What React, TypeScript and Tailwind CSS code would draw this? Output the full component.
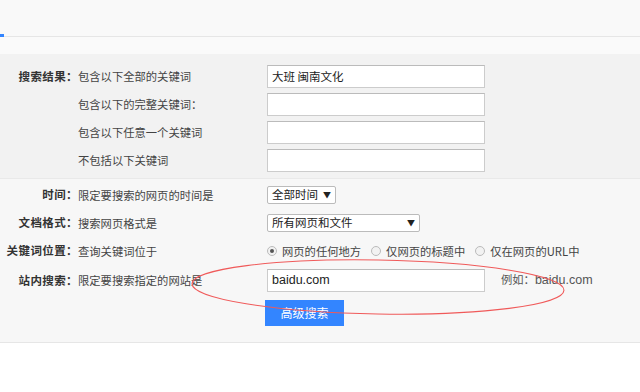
import React from "react";

const cjk = { fontFamily: '"Noto Sans CJK SC", "Noto Sans", sans-serif' };
const latin = { fontFamily: '"Liberation Sans", Arial, sans-serif' };

function Row({ label, desc, children, h }: { label?: string; desc: string; children?: React.ReactNode; h: string }) {
  return (
    <div className={`flex items-center ${h}`}>
      <div className="w-[78px] shrink-0 text-right font-bold text-[11.5px] tracking-[0.4px] text-[#333]">{label}</div>
      <div className="w-[189px] shrink-0 text-[11.3px] text-[#444]">{desc}</div>
      <div className="flex items-center">{children}</div>
    </div>
  );
}

function Input({ value }: { value?: string }) {
  return (
    <div className="w-[218px] h-[23px] bg-white border border-[#ccc] border-t-[#bbb] flex items-center px-[4px] text-[11.5px] text-[#222]">
      {value}
    </div>
  );
}

function Radio({ checked, label }: { checked?: boolean; label: string }) {
  return (
    <div className="flex items-center mr-[10px]">
      <div className="w-[10px] h-[10px] rounded-full border border-[#bbb] bg-[#f2f2f2] flex items-center justify-center mr-[5px]">
        {checked && <div className="w-[4px] h-[4px] rounded-full bg-[#555]" />}
      </div>
      <span className="text-[11.3px] text-[#444]">{label}</span>
    </div>
  );
}

export default function App() {
  return (
    <div className="relative w-[640px] h-[392px] bg-white overflow-hidden" style={cjk}>
      <div className="h-[36px] bg-[#f9f9f9]" />
      <div className="relative h-[1px] bg-[#e6e6e6]">
        <div className="absolute left-0 top-[-2px] w-[4px] h-[3px] bg-[#3385ff]" />
      </div>
      <div className="h-[17px] bg-[#fafafa]" />
      <div className="bg-[#f2f2f2] pt-[11px] pb-[6px] border-b border-[#e9e9e9]">
        <div className="flex flex-col gap-[5px]">
          <Row label="搜索结果：" desc="包含以下全部的关键词" h="h-[23px]">
            <Input value="大班 闽南文化" />
          </Row>
          <Row desc="包含以下的完整关键词：" h="h-[23px]">
            <Input />
          </Row>
          <Row desc="包含以下任意一个关键词" h="h-[23px]">
            <Input />
          </Row>
          <Row desc="不包括以下关键词" h="h-[23px]">
            <Input />
          </Row>
        </div>
      </div>
      <div className="bg-[#f7f7f7] pt-[6px] h-[164px] border-b border-[#e6e6e6]">
        <div className="flex flex-col">
          <Row label="时间：" desc="限定要搜索的网页的时间是" h="h-[20px]">
            <div className="w-[69px] h-[18px] bg-white border border-[#bbb] rounded-[2px] flex items-center justify-between px-[4px] text-[11.5px] text-[#222]">
              <span>全部时间</span>
              <span className="text-[8px]">▼</span>
            </div>
          </Row>
          <div className="h-[8px]" />
          <Row label="文档格式：" desc="搜索网页格式是" h="h-[20px]">
            <div className="w-[153px] h-[18px] bg-white border border-[#bbb] rounded-[2px] flex items-center justify-between px-[4px] text-[11.5px] text-[#222]">
              <span>所有网页和文件</span>
              <span className="text-[8px]">▼</span>
            </div>
          </Row>
          <div className="h-[8px]" />
          <Row label="关键词位置：" desc="查询关键词位于" h="h-[20px]">
            <div className="flex items-center">
              <Radio checked label="网页的任何地方" />
              <Radio label="仅网页的标题中" />
              <Radio label="仅在网页的URL中" />
            </div>
          </Row>
          <div className="h-[8px]" />
          <Row label="站内搜索：" desc="限定要搜索指定的网站是" h="h-[23px]">
            <div className="w-[218px] h-[23px] bg-white border border-[#ccc] border-t-[#bbb] flex items-center px-[4px] text-[12.5px] text-[#222]" style={latin}>
              baidu.com
            </div>
            <span className="ml-[16px] text-[11.3px] text-[#555]">例如：<span style={latin} className="text-[12.5px]">baidu.com</span></span>
          </Row>
          <div className="h-[8px]" />
          <div className="pl-[265px]">
            <div className="w-[79px] h-[26px] bg-[#3385ff] text-white text-[12px] flex items-center justify-center">高级搜索</div>
          </div>
        </div>
      </div>
      <svg className="absolute left-0 top-0 pointer-events-none" width="640" height="392">
        <ellipse cx="378" cy="287" rx="186" ry="27" transform="rotate(1 378 287)" fill="none" stroke="#f05a5a" strokeWidth="1.1" />
      </svg>
    </div>
  );
}
